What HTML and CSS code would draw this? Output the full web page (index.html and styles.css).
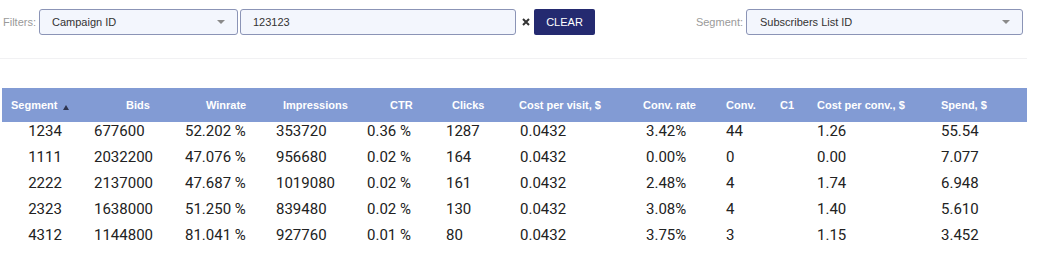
FILE: index.html
```html
<!DOCTYPE html>
<html>
<head>
<meta charset="utf-8">
<link rel="stylesheet" href="styles.css">
</head>
<body>
<div class="page">
  <div class="toolbar">
    <div class="group">
      <span class="label">Filters:</span>
      <div class="select sel-campaign"><span>Campaign ID</span><i class="caret"></i></div>
      <div class="input">123123</div>
      <svg class="clear-x" width="8" height="8" viewBox="0 0 8 8"><path d="M1 1L7 7M7 1L1 7" stroke="#333" stroke-width="2"/></svg>
      <button class="btn">CLEAR</button>
    </div>
    <div class="group right">
      <span class="label">Segment:</span>
      <div class="select sel-segment"><span>Subscribers List ID</span><i class="caret"></i></div>
    </div>
  </div>

  <table class="grid">
    <colgroup>
      <col class="w-seg"><col class="w-bids"><col class="w-win"><col class="w-imp"><col class="w-ctr"><col class="w-clk"><col class="w-cpv"><col class="w-cr"><col class="w-conv"><col class="w-c1"><col class="w-cpc"><col class="w-sp">
    </colgroup>
    <thead>
      <tr>
        <th class="h-seg">Segment <i class="sort"></i></th>
        <th class="h-bids">Bids</th>
        <th class="h-win">Winrate</th>
        <th class="h-imp">Impressions</th>
        <th class="h-ctr">CTR</th>
        <th class="h-clk">Clicks</th>
        <th class="h-cpv">Cost per visit, $</th>
        <th class="h-cr">Conv. rate</th>
        <th class="h-std">Conv.</th>
        <th class="h-std">C1</th>
        <th class="h-std">Cost per conv., $</th>
        <th class="h-std">Spend, $</th>
      </tr>
    </thead>
    <tbody>
      <tr><td class="seg">1234</td><td>677600</td><td>52.202 %</td><td>353720</td><td>0.36 %</td><td>1287</td><td>0.0432</td><td>3.42%</td><td>44</td><td></td><td>1.26</td><td>55.54</td></tr>
      <tr><td class="seg">1111</td><td>2032200</td><td>47.076 %</td><td>956680</td><td>0.02 %</td><td>164</td><td>0.0432</td><td>0.00%</td><td>0</td><td></td><td>0.00</td><td>7.077</td></tr>
      <tr><td class="seg">2222</td><td>2137000</td><td>47.687 %</td><td>1019080</td><td>0.02 %</td><td>161</td><td>0.0432</td><td>2.48%</td><td>4</td><td></td><td>1.74</td><td>6.948</td></tr>
      <tr><td class="seg">2323</td><td>1638000</td><td>51.250 %</td><td>839480</td><td>0.02 %</td><td>130</td><td>0.0432</td><td>3.08%</td><td>4</td><td></td><td>1.40</td><td>5.610</td></tr>
      <tr><td class="seg">4312</td><td>1144800</td><td>81.041 %</td><td>927760</td><td>0.01 %</td><td>80</td><td>0.0432</td><td>3.75%</td><td>3</td><td></td><td>1.15</td><td>3.452</td></tr>
    </tbody>
  </table>
</div>
</body>
</html>
```

FILE: styles.css
```css
html, body {
  margin: 0;
  padding: 0;
  background: #fff;
}

.page {
  width: 1027px;
  font-family: "Liberation Sans", Arial, sans-serif;
}

.toolbar {
  display: flex;
  justify-content: space-between;
  align-items: flex-start;
  padding: 9px 4px 23px 3px;
  border-bottom: 1px solid #f1f1f3;
}

.group {
  display: flex;
  align-items: center;
  height: 26px;
}

.label {
  font-size: 11px;
  color: #9a9a9a;
  margin-right: 3px;
}

.select,
.input {
  box-sizing: border-box;
  height: 26px;
  background: #f3f6fd;
  border: 1px solid #8b94b6;
  border-radius: 3px;
  font-size: 11px;
  color: #333;
  display: flex;
  align-items: center;
  justify-content: space-between;
  padding: 0 12px;
}

.sel-campaign {
  width: 199px;
}

.input {
  width: 276px;
  margin-left: 2px;
}

.sel-segment {
  width: 277px;
  padding-left: 13px;
}

.caret {
  width: 0;
  height: 0;
  border-left: 4px solid transparent;
  border-right: 4px solid transparent;
  border-top: 4px solid #8a8a8a;
}

.clear-x {
  margin-left: 6px;
  margin-right: 4px;
  display: block;
}

.btn {
  box-sizing: border-box;
  width: 61px;
  height: 26px;
  background: #242a70;
  color: #fff;
  border: 0;
  border-radius: 2px;
  font-family: "Liberation Sans", Arial, sans-serif;
  font-size: 11px;
  padding: 0;
  cursor: pointer;
}

.grid {
  margin-top: 29px;
  margin-left: 2px;
  width: 1025px;
  table-layout: fixed;
  border-collapse: collapse;
}

.w-seg { width: 86px; }
.w-bids { width: 91px; }
.w-win { width: 91px; }
.w-imp { width: 91px; }
.w-ctr { width: 79px; }
.w-clk { width: 74px; }
.w-cpv { width: 126px; }
.w-cr { width: 80px; }
.w-conv { width: 54px; }
.w-c1 { width: 37px; }
.w-cpc { width: 124px; }
.w-sp { width: 92px; }

.grid thead tr {
  background: #829bd4;
  height: 34px;
}

.grid th {
  color: #fff;
  font-size: 11px;
  font-weight: bold;
  text-align: left;
  white-space: nowrap;
  padding: 0 0 0 6px;
  vertical-align: middle;
}

.h-seg { padding-left: 9px !important; }
.h-bids { padding-left: 38px !important; }
.h-win { padding-left: 27px !important; }
.h-imp { padding-left: 13px !important; }
.h-ctr { padding-left: 29px !important; }
.h-clk { padding-left: 12px !important; }
.h-cpv { padding-left: 5px !important; }
.h-cr { padding-left: 3px !important; }

.sort {
  display: inline-block;
  width: 0;
  height: 0;
  border-left: 3px solid transparent;
  border-right: 3px solid transparent;
  border-bottom: 5px solid #2f3550;
  margin-left: 2px;
  vertical-align: -1px;
}

.grid td {
  font-family: Roboto, "Liberation Sans", sans-serif;
  font-size: 15px;
  color: #222;
  line-height: 18px;
  height: 26px;
  box-sizing: border-box;
  padding: 0 0 8px 6px;
  vertical-align: top;
  white-space: nowrap;
}

.grid td.seg {
  text-align: center;
  padding-left: 0;
}
```
